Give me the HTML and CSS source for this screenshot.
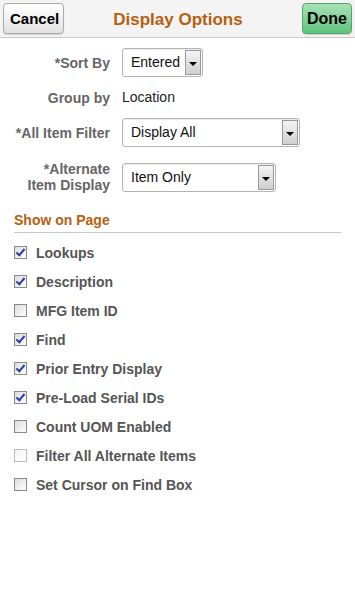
FILE: index.html
```html
<!DOCTYPE html>
<html lang="en">
<head>
    <meta charset="UTF-8">
    <meta name="viewport" content="width=device-width, initial-scale=1.0">
    <title>Display Options</title>
    <link rel="stylesheet" href="styles.css">
</head>
<body>

    <div class="header">
        <button class="btn cancel">Cancel</button>
        <h1 class="title">Display Options</h1>
        <button class="btn done">Done</button>
    </div>

    <div class="form">
        <label class="label">*Sort By</label>
        <div class="select sort"><span class="value">Entered</span><span class="arrow"></span></div>

        <label class="label">Group by</label>
        <div class="plain">Location</div>

        <label class="label">*All Item Filter</label>
        <div class="select filter"><span class="value">Display All</span><span class="arrow"></span></div>

        <label class="label two-line">*Alternate<br>Item Display</label>
        <div class="select alt"><span class="value">Item Only</span><span class="arrow"></span></div>
    </div>

    <h2 class="section">Show on Page</h2>
    <ul class="checks">
        <li><span class="box checked"></span>Lookups</li>
        <li><span class="box checked"></span>Description</li>
        <li><span class="box"></span>MFG Item ID</li>
        <li><span class="box checked"></span>Find</li>
        <li><span class="box checked"></span>Prior Entry Display</li>
        <li><span class="box checked"></span>Pre-Load Serial IDs</li>
        <li><span class="box"></span>Count UOM Enabled</li>
        <li><span class="box disabled"></span>Filter All Alternate Items</li>
        <li><span class="box"></span>Set Cursor on Find Box</li>
    </ul>

</body>
</html>
```

FILE: styles.css
```css
body {
    margin: 0;
    font-family: "Liberation Sans", Arial, sans-serif;
    background-color: white;
    color: #555;
}
.header {
    display: flex;
    align-items: center;
    justify-content: space-between;
    height: 37px;
    padding: 0 3px;
    background-color: #f4f4f4;
    border-bottom: 1px solid #c8c8c8;
}
.title {
    margin: 0;
    font-size: 17px;
    color: #b8600f;
    padding: 3px 10px 0 0;
}
.btn {
    height: 31px;
    font-family: inherit;
    font-size: 15px;
    font-weight: bold;
    color: black;
    border-radius: 4px;
    cursor: pointer;
}
.cancel {
    width: 61px;
    background: linear-gradient(#ffffff, #e2e2e2);
    border: 1px solid #aaa;
    box-shadow: 0 1px 1px rgba(0, 0, 0, 0.15);
}
.done {
    width: 50px;
    padding: 0;
    font-size: 16px;
    background: linear-gradient(#a9e2b8, #5fc37e);
    border: 1px solid #4fa86a;
    box-shadow: 0 1px 1px rgba(0, 0, 0, 0.15);
}
.form {
    display: grid;
    grid-template-columns: 110px auto;
    column-gap: 12px;
    row-gap: 6px;
    align-items: center;
    padding-top: 10px;
}
.label {
    text-align: right;
    font-size: 14px;
    font-weight: bold;
    color: #666;
    line-height: 16px;
}
.two-line {
    margin-top: 8px;
}
.plain {
    font-size: 14px;
    color: #222;
    height: 29px;
    line-height: 29px;
}
.select {
    display: flex;
    align-items: stretch;
    height: 27px;
    border: 1px solid #b4b4b4;
    border-radius: 3px;
    background-color: white;
    box-shadow: inset 0 1px 1px rgba(0, 0, 0, 0.08);
    font-size: 14px;
    color: #111;
}
.sort {
    width: 79px;
}
.filter {
    width: 176px;
}
.alt {
    width: 152px;
    margin-top: 8px;
}
.value {
    flex: 1;
    line-height: 27px;
    padding-left: 8px;
}
.arrow {
    width: 14px;
    margin: 1px;
    border: 1px solid #999;
    background: linear-gradient(#f4f4f4, #cfcfcf);
    position: relative;
}
.arrow::after {
    content: "";
    position: absolute;
    left: 3px;
    top: 11px;
    border-left: 4px solid transparent;
    border-right: 4px solid transparent;
    border-top: 4px solid #000;
}
.section {
    margin: 19px 14px 0;
    padding-bottom: 4px;
    font-size: 14px;
    color: #b8600f;
    border-bottom: 1px solid #c8c8c8;
}
.checks {
    list-style: none;
    margin: 0;
    padding: 5px 14px 0;
}
.checks li {
    display: flex;
    align-items: center;
    height: 29px;
    font-size: 14px;
    font-weight: bold;
    color: #555;
}
.box {
    width: 11px;
    height: 11px;
    margin-right: 9px;
    border: 1px solid #8a8a8a;
    background: linear-gradient(135deg, #dcdcdc, #ffffff);
    position: relative;
}
.box.checked::after {
    content: "";
    position: absolute;
    left: 3px;
    top: 0px;
    width: 3px;
    height: 7px;
    border-right: 2px solid #2a3fa8;
    border-bottom: 2px solid #2a3fa8;
    transform: rotate(40deg);
}
.box.disabled {
    border-color: #bbb;
    background: linear-gradient(135deg, #f4f4f4, #ffffff);
}
```
